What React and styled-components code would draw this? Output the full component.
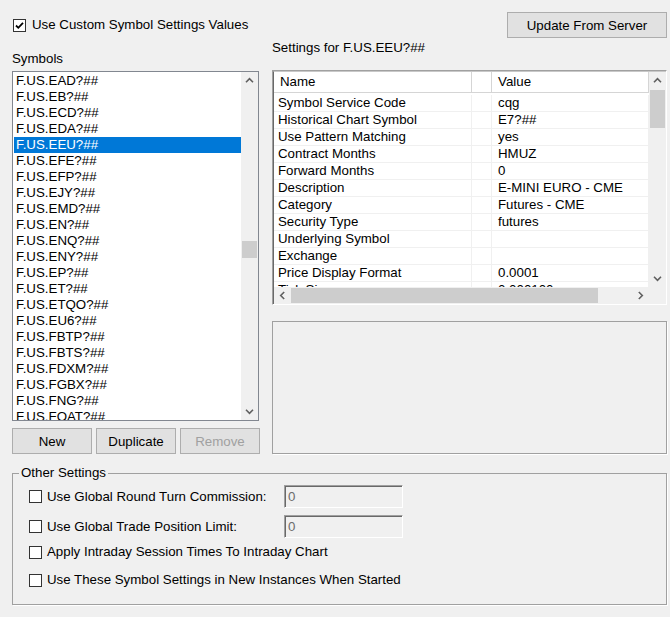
import React from "react";
import styled, { createGlobalStyle } from "styled-components";

const GlobalStyle = createGlobalStyle`
  html, body {
    margin: 0;
    padding: 0;
    background: #f0f0f0;
  }
  body {
    font-family: "Liberation Sans", Arial, sans-serif;
    font-size: 13.3px;
    color: #000;
  }
`;

const SYMBOLS = [
  "F.US.EAD?##",
  "F.US.EB?##",
  "F.US.ECD?##",
  "F.US.EDA?##",
  "F.US.EEU?##",
  "F.US.EFE?##",
  "F.US.EFP?##",
  "F.US.EJY?##",
  "F.US.EMD?##",
  "F.US.EN?##",
  "F.US.ENQ?##",
  "F.US.ENY?##",
  "F.US.EP?##",
  "F.US.ET?##",
  "F.US.ETQO?##",
  "F.US.EU6?##",
  "F.US.FBTP?##",
  "F.US.FBTS?##",
  "F.US.FDXM?##",
  "F.US.FGBX?##",
  "F.US.FNG?##",
  "F.US.FOAT?##",
];

const SETTINGS = [
  ["Symbol Service Code", "cqg"],
  ["Historical Chart Symbol", "E7?##"],
  ["Use Pattern Matching", "yes"],
  ["Contract Months", "HMUZ"],
  ["Forward Months", "0"],
  ["Description", "E-MINI EURO - CME"],
  ["Category", "Futures - CME"],
  ["Security Type", "futures"],
  ["Underlying Symbol", ""],
  ["Exchange", ""],
  ["Price Display Format", "0.0001"],
  ["Tick Size", "0.000100"],
];

const Window = styled.div`
  width: 670px;
  height: 617px;
  box-sizing: border-box;
  padding: 12px 3px 0 12px;
  display: flex;
  flex-direction: column;
`;

const TopBar = styled.div`
  display: flex;
  justify-content: space-between;
  align-items: center;
  height: 26px;
`;

const CheckLabel = styled.label`
  display: flex;
  align-items: center;
  gap: ${(p) => p.$gap || 5}px;
  margin-left: ${(p) => p.$indent || 0}px;
  line-height: 16px;
  white-space: nowrap;
`;

const Box = styled.span`
  width: 13px;
  height: 13px;
  box-sizing: border-box;
  border: 1px solid #333;
  background: #fff;
  display: flex;
  align-items: center;
  justify-content: center;
  flex-shrink: 0;
`;

const Button = styled.button`
  width: ${(p) => p.$w || 80}px;
  height: 26px;
  box-sizing: border-box;
  border: 1px solid #adadad;
  background: #e1e1e1;
  font-family: inherit;
  font-size: 13.3px;
  color: ${(p) => (p.disabled ? "#a0a0a0" : "#000")};
  padding: 0;
`;

const Main = styled.div`
  display: grid;
  grid-template-columns: 248px 395px;
  column-gap: 12px;
`;

const Column = styled.div`
  display: flex;
  flex-direction: column;
`;

const Caption = styled.div`
  line-height: 16px;
  margin-top: ${(p) => p.$top}px;
`;

const ListBox = styled.div`
  margin-top: 4px;
  width: 247px;
  height: 350px;
  box-sizing: border-box;
  border: 1px solid #828790;
  background: #fff;
  display: grid;
  grid-template-columns: 1fr 17px;
  overflow: hidden;
`;

const Items = styled.div`
  overflow: hidden;
  padding: 1px 0 0 1px;
`;

const Item = styled.div`
  height: 16px;
  line-height: 16px;
  padding-left: 2px;
  white-space: nowrap;
  background: ${(p) => (p.$selected ? "#0078d7" : "transparent")};
  color: ${(p) => (p.$selected ? "#fff" : "#000")};
`;

const ButtonRow = styled.div`
  display: flex;
  gap: 4px;
  margin-top: 7px;
`;

const VScroll = styled.div`
  background: #f0f0f0;
  display: flex;
  flex-direction: column;
`;

const HScroll = styled.div`
  background: #f0f0f0;
  display: flex;
  height: 17px;
`;

const Arrow = styled.div`
  width: 17px;
  height: 17px;
  flex-shrink: 0;
  display: flex;
  align-items: center;
  justify-content: center;
`;

const Track = styled.div`
  flex: 1;
  display: flex;
  flex-direction: ${(p) => (p.$horizontal ? "row" : "column")};
  align-items: center;
`;

const Thumb = styled.div`
  background: #cdcdcd;
  ${(p) =>
    p.$horizontal
      ? `width: ${p.$size}px; height: 15px; margin-left: ${p.$offset}px;`
      : `height: ${p.$size}px; width: 15px; margin-top: ${p.$offset}px;`}
`;

const GridBox = styled.div`
  margin-top: 14px;
  height: 235px;
  box-sizing: border-box;
  border: 1px solid;
  border-color: #a0a0a0 #fff #fff #a0a0a0;
`;

const GridInner = styled.div`
  height: 100%;
  box-sizing: border-box;
  border-left: 1px solid #696969;
  border-top: 1px solid #c8c8c8;
  background: #fff;
  display: grid;
  grid-template-columns: 1fr 17px;
  grid-template-rows: 1fr 17px;
  overflow: hidden;
`;

const Table = styled.div`
  overflow: hidden;
`;

const GridRow = styled.div`
  display: grid;
  grid-template-columns: 198px 20px 1fr;
  height: ${(p) => (p.$header ? 21 : 17)}px;
  box-sizing: border-box;
  border-bottom: 1px solid ${(p) => (p.$header ? "#d5d5d5" : "#f0f0f0")};
  margin-bottom: ${(p) => (p.$header ? 2 : 0)}px;
`;

const Cell = styled.div`
  line-height: 16px;
  padding-left: ${(p) => p.$pad || 4}px;
  border-right: 1px solid ${(p) => (p.$header ? "#d5d5d5" : "#f0f0f0")};
  white-space: nowrap;
  overflow: hidden;
  display: flex;
  align-items: center;
`;

const Corner = styled.div`
  background: #f0f0f0;
`;

const Panel = styled.div`
  margin-top: 16px;
  height: 133px;
  box-sizing: border-box;
  border: 1px solid #a0a0a0;
  box-shadow: 1px 1px 0 #fff;
`;

const Group = styled.fieldset`
  margin: 11px 0 0 0;
  min-width: 0;
  padding: 4px 0 10px 16px;
  border: 1px solid #a0a0a0;
  box-shadow: 1px 1px 0 #fff;
`;

const Legend = styled.legend`
  margin-left: -10px;
  padding: 0 2px;
  line-height: 16px;
`;

const OptionRow = styled.div`
  display: grid;
  grid-template-columns: 255px 119px;
  align-items: center;
  height: ${(p) => (p.$tall ? 28 : 23)}px;
  margin-top: ${(p) => p.$top || 0}px;
`;

const TextField = styled.input`
  width: 119px;
  height: 23px;
  box-sizing: border-box;
  border: 1px solid;
  border-color: #a0a0a0 #fff #fff #a0a0a0;
  box-shadow: inset 1px 1px 0 #696969;
  background: #f0f0f0;
  font-family: inherit;
  font-size: 13.3px;
  color: #6d6d6d;
  padding: 0 0 0 3px;
  outline: none;
`;

const Chevron = ({ dir }) => {
  const rot = { up: 0, down: 180, left: -90, right: 90 }[dir];
  return (
    <svg width="9" height="9" viewBox="0 0 9 9" style={{ transform: `rotate(${rot}deg)` }}>
      <path d="M1 6.2 L4.5 2.7 L8 6.2" fill="none" stroke="#606060" strokeWidth="1.6" />
    </svg>
  );
};

const CheckBox = ({ checked }) => (
  <Box>
    {checked && (
      <svg width="11" height="11" viewBox="0 0 11 11">
        <path d="M2 5.5 L4.3 7.8 L9 2.8" fill="none" stroke="#000" strokeWidth="1.8" />
      </svg>
    )}
  </Box>
);

const VScrollBar = ({ offset, size }) => (
  <VScroll>
    <Arrow>
      <Chevron dir="up" />
    </Arrow>
    <Track>
      <Thumb $offset={offset} $size={size} />
    </Track>
    <Arrow>
      <Chevron dir="down" />
    </Arrow>
  </VScroll>
);

const App = () => {
  return (
    <Window>
      <GlobalStyle />
      <TopBar>
        <CheckLabel $gap={6} $indent={1}>
          <CheckBox checked />
          Use Custom Symbol Settings Values
        </CheckLabel>
        <Button $w={160}>Update From Server</Button>
      </TopBar>

      <Main>
        <Column>
          <Caption $top={13}>Symbols</Caption>
          <ListBox>
            <Items>
              {SYMBOLS.map((s) => (
                <Item key={s} $selected={s === "F.US.EEU?##"}>
                  {s}
                </Item>
              ))}
            </Items>
            <VScrollBar offset={152} size={17} />
          </ListBox>
          <ButtonRow>
            <Button>New</Button>
            <Button>Duplicate</Button>
            <Button disabled>Remove</Button>
          </ButtonRow>
        </Column>

        <Column>
          <Caption $top={2}>Settings for F.US.EEU?##</Caption>
          <GridBox>
            <GridInner>
              <Table>
                <GridRow $header>
                  <Cell $header $pad={6}>Name</Cell>
                  <Cell $header />
                  <Cell $header $pad={6}>Value</Cell>
                </GridRow>
                {SETTINGS.map(([name, value]) => (
                  <GridRow key={name}>
                    <Cell>{name}</Cell>
                    <Cell />
                    <Cell $pad={6}>{value}</Cell>
                  </GridRow>
                ))}
              </Table>
              <VScrollBar offset={1} size={38} />
              <HScroll>
                <Arrow>
                  <Chevron dir="left" />
                </Arrow>
                <Track $horizontal>
                  <Thumb $horizontal $offset={0} $size={307} />
                </Track>
                <Arrow>
                  <Chevron dir="right" />
                </Arrow>
              </HScroll>
              <Corner />
            </GridInner>
          </GridBox>
          <Panel />
        </Column>
      </Main>

      <Group>
        <Legend>Other Settings</Legend>
        <OptionRow>
          <CheckLabel>
            <CheckBox />
            Use Global Round Turn Commission:
          </CheckLabel>
          <TextField disabled value="0" readOnly />
        </OptionRow>
        <OptionRow $top={7}>
          <CheckLabel>
            <CheckBox />
            Use Global Trade Position Limit:
          </CheckLabel>
          <TextField disabled value="0" readOnly />
        </OptionRow>
        <OptionRow $tall>
          <CheckLabel>
            <CheckBox />
            Apply Intraday Session Times To Intraday Chart
          </CheckLabel>
        </OptionRow>
        <OptionRow $tall>
          <CheckLabel>
            <CheckBox />
            Use These Symbol Settings in New Instances When Started
          </CheckLabel>
        </OptionRow>
      </Group>
    </Window>
  );
};

export default App;
